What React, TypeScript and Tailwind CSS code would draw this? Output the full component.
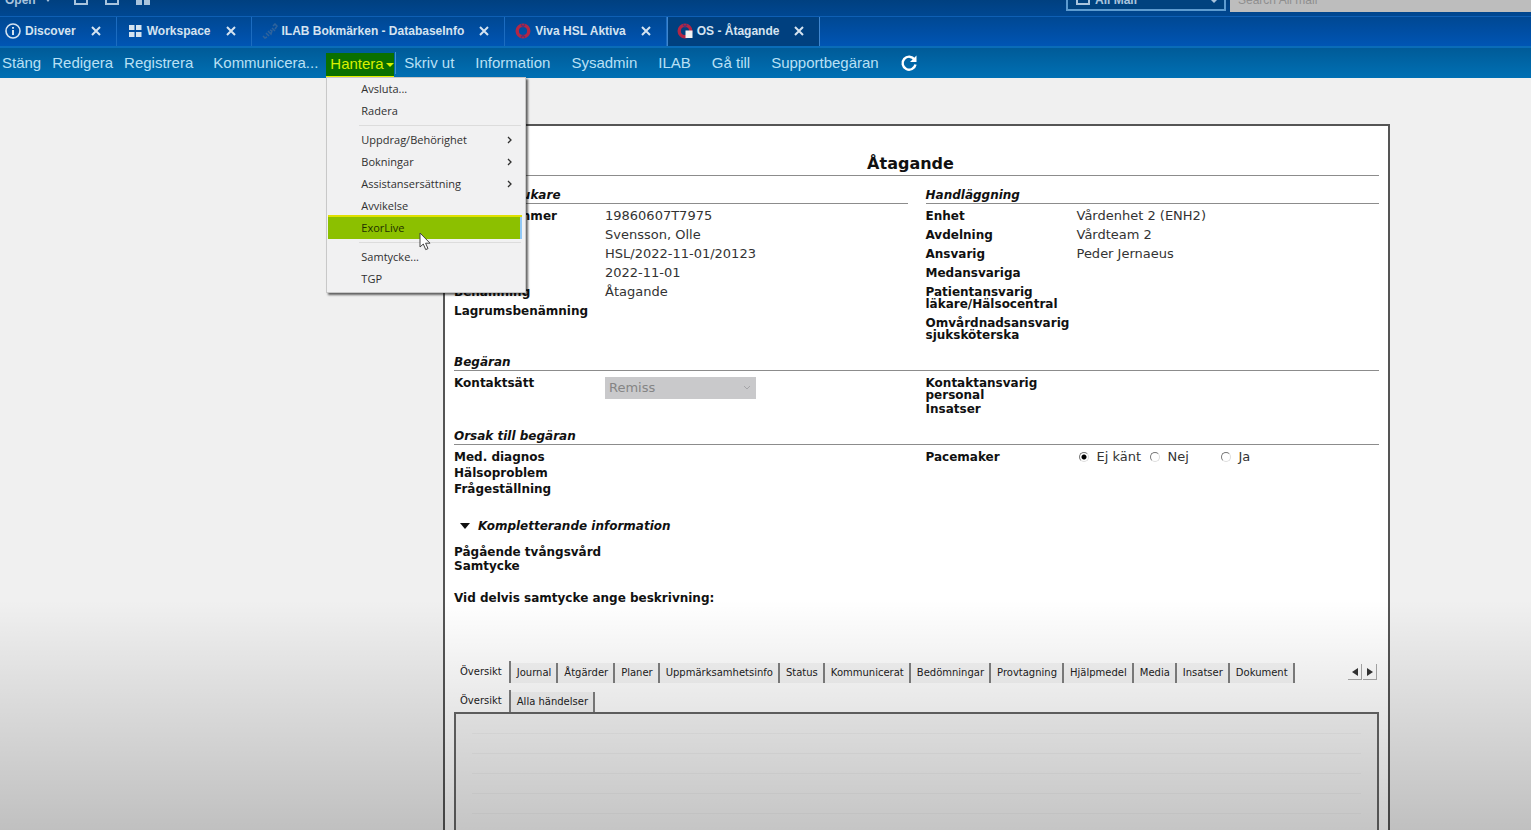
import { useState, type ReactNode } from "react";

type Field = {
    label: string;
    value?: string;
};

type DocTab = {
    title: string;
    icon: ReactNode;
};

type MenuEntry = {
    label: string;
    submenu?: boolean;
    separated?: boolean;
};

const patientFields: Field[] = [
    { label: "Personnummer", value: "19860607T7975" },
    { label: "Namn", value: "Svensson, Olle" },
    { label: "Ärende", value: "HSL/2022-11-01/20123" },
    { label: "Datum", value: "2022-11-01" },
    { label: "Benämning", value: "Åtagande" },
    { label: "Lagrumsbenämning" },
];

const handlingFields: Field[] = [
    { label: "Enhet", value: "Vårdenhet 2 (ENH2)" },
    { label: "Avdelning", value: "Vårdteam 2" },
    { label: "Ansvarig", value: "Peder Jernaeus" },
    { label: "Medansvariga" },
    { label: "Patientansvarig läkare/Hälsocentral" },
    { label: "Omvårdnadsansvarig sjuksköterska" },
];

const menuEntries: MenuEntry[] = [
    { label: "Avsluta..." },
    { label: "Radera" },
    { label: "Uppdrag/Behörighet", submenu: true, separated: true },
    { label: "Bokningar", submenu: true },
    { label: "Assistansersättning", submenu: true },
    { label: "Avvikelse" },
    { label: "ExorLive" },
    { label: "Samtycke...", separated: true },
    { label: "TGP" },
];

const recordTabs = [
    "Översikt",
    "Journal",
    "Åtgärder",
    "Planer",
    "Uppmärksamhetsinfo",
    "Status",
    "Kommunicerat",
    "Bedömningar",
    "Provtagning",
    "Hjälpmedel",
    "Media",
    "Insatser",
    "Dokument",
];

function InfoIcon() {
    return (
        <svg viewBox="0 0 16 16" className="size-4" fill="none" stroke="currentColor">
            <circle cx="8" cy="8" r="7" strokeWidth="1.6" />
            <path d="M8 7v5M8 4v1.8" strokeWidth="2" />
        </svg>
    );
}

function GridIcon() {
    return (
        <svg viewBox="0 0 16 16" className="size-4" fill="currentColor">
            <path d="M2 2h5.5v5H2zM9 2h5.5v5H9zM2 9h5.5v5H2zM9 9h5.5v5H9z" />
        </svg>
    );
}

function PlugIcon() {
    return (
        <svg viewBox="0 0 16 16" className="size-4" fill="none" stroke="#2f639c" strokeWidth="1.5">
            <path d="M1 13l2 2 2-1M4 10l3 3M6 8l3 3 1-3-2-1M10 5l3 3M11 3l2-2 2 2-2 3" />
        </svg>
    );
}

function DatabaseIcon() {
    return (
        <svg viewBox="0 0 16 16" className="size-4" fill="none">
            <circle cx="8" cy="8" r="5.8" stroke="#b32645" strokeWidth="3.4" />
            <path d="M6 1.500l2 2.500 2-2.500M6 14.500l2-2.500 2 2.500" stroke="#5d2f70" strokeWidth="1.4" />
        </svg>
    );
}

function DocumentIcon() {
    return (
        <svg viewBox="0 0 16 16" className="size-4" fill="none">
            <circle cx="8" cy="8" r="5.8" stroke="#b32645" strokeWidth="3.4" />
            <path d="M6 1.500l2 2.500 2-2.500" stroke="#5d2f70" strokeWidth="1.4" />
            <path d="M8.500 7.500h7v7.500h-7z" fill="#f2f2f2" />
        </svg>
    );
}

const docTabs: DocTab[] = [
    { title: "Discover", icon: <InfoIcon /> },
    { title: "Workspace", icon: <GridIcon /> },
    { title: "ILAB Bokmärken - DatabaseInfo", icon: <PlugIcon /> },
    { title: "Viva HSL Aktiva", icon: <DatabaseIcon /> },
    { title: "OS - Åtagande", icon: <DocumentIcon /> },
];

function TopStrip() {
    return (
        <div className="h-4 overflow-hidden">
            <div className="-mt-4 flex h-8 items-center text-xs font-bold text-[#a9c4dd]">
                <button type="button" className="flex items-center gap-2 pl-[5px]">
                    Open
                    <svg viewBox="0 0 8 8" className="size-2" fill="currentColor">
                        <path d="M1 2h6L4 6z" />
                    </svg>
                </button>
                <div className="ml-[22px] flex items-center gap-[17px]">
                    <button type="button" aria-label="Save">
                        <svg viewBox="0 0 14 10" className="h-2.5 w-3.5" fill="none" stroke="currentColor" strokeWidth="2">
                            <path d="M1 1h12v8H1z" />
                        </svg>
                    </button>
                    <button type="button" aria-label="Print">
                        <svg viewBox="0 0 14 10" className="h-2.5 w-3.5" fill="none" stroke="currentColor" strokeWidth="2">
                            <path d="M1 1h12v8H1z" />
                        </svg>
                    </button>
                    <button type="button" aria-label="Tiles">
                        <svg viewBox="0 0 14 10" className="h-2.5 w-3.5" fill="currentColor">
                            <path d="M0 0h6v10H0zM8 0h6v10H8z" />
                        </svg>
                    </button>
                </div>
                <div className="relative ml-auto h-[22px] w-[160px] border-2 border-[#5d9bd0] bg-[#00427f]">
                    <svg viewBox="0 0 14 12" className="absolute left-2 top-0.5 h-3 w-3.5" fill="none" stroke="currentColor" strokeWidth="2">
                        <path d="M1 1h12v10H1zM5 6h4" />
                    </svg>
                    <select aria-label="Search scope" className="size-full appearance-none pl-[27px] text-xs leading-4 outline-none">
                        <option>All Mail</option>
                    </select>
                    <svg viewBox="0 0 8 8" className="absolute right-1.5 top-1.5 size-2" fill="currentColor">
                        <path d="M0 2h8L4 6z" />
                    </svg>
                </div>
                <input
                    type="search"
                    aria-label="Search All mail"
                    placeholder="Search All mail"
                    className="ml-1 h-6 w-[301px] bg-[#bdbdbd] px-2 text-xs font-normal placeholder:text-[#8f8f8f]"
                />
            </div>
        </div>
    );
}

function DocumentTabs() {
    return (
        <div className="flex h-[30px] border-t border-[#0f5fb4]">
            {docTabs.map((tab, index) => {
                const active = index === docTabs.length - 1;
                return (
                    <div
                        key={tab.title}
                        className={
                            active
                                ? "flex items-center border-x border-[#3f86cf] bg-[#00407f] pb-0.5 pl-[9px] pr-[15px] text-[#d5e3f0]"
                                : "flex items-center border-r border-[#1c6cc0] pb-0.5 pl-[10px] pr-[15px] text-[#d5e3f0] first:pl-[5px]"
                        }
                    >
                        <button type="button" className="flex items-center gap-1 text-xs font-bold whitespace-nowrap">
                            {tab.icon}
                            {tab.title}
                        </button>
                        <button type="button" aria-label={`Close ${tab.title}`} className="ml-[15px]">
                            <svg viewBox="0 0 10 10" className="size-2.5" fill="none" stroke="currentColor" strokeWidth="2">
                                <path d="M1 1l8 8M9 1L1 9" />
                            </svg>
                        </button>
                    </div>
                );
            })}
        </div>
    );
}

function HanteraMenu() {
    return (
        <div
            role="menu"
            className="absolute left-0 top-full z-20 -mt-px w-[200px] border border-[#c8c8c8] bg-[#f1f1f2] pb-0.5 font-['Open_Sans',sans-serif] text-[11px] text-[#303030] shadow-[2px_2px_2px_rgba(0,0,0,0.6)]"
        >
            {menuEntries.map((entry) => {
                const highlighted = entry.label === "ExorLive";
                return (
                    <div key={entry.label}>
                        {entry.separated ? <hr className="my-[3px] ml-8 mr-1 border-[#dcdcdc]" /> : null}
                        <button
                            type="button"
                            role="menuitem"
                            className={
                                highlighted
                                    ? "mx-px flex h-[22px] w-[194px] items-center border-r-2 border-[#90c8f6] bg-[#8cc000] pl-[33px] text-[#1f3000] shadow-[0_-2px_0_#e0e000]"
                                    : "flex h-[22px] w-full items-center justify-between pl-[34px] pr-3"
                            }
                        >
                            {entry.label}
                            {entry.submenu ? (
                                <svg viewBox="0 0 6 8" className="h-2 w-1.5" fill="none" stroke="currentColor" strokeWidth="1.3">
                                    <path d="M1 1l3 3-3 3" />
                                </svg>
                            ) : null}
                        </button>
                    </div>
                );
            })}
            <svg viewBox="0 0 12 19" className="absolute left-[92px] top-[154px] h-[19px] w-3">
                <path d="M1 1v14l3.300-3 2.400 5.600 2.300-1-2.400-5.400H11z" fill="#fff" stroke="#444" />
            </svg>
        </div>
    );
}

function ActionBar() {
    const [open, setOpen] = useState(true);

    return (
        <div className="flex h-8 items-center border-t-2 border-[#0a6cb8] bg-gradient-to-b from-[#005b98] to-[#0070b4] text-[15px] whitespace-nowrap text-[#b9e0f5]">
            <div className="flex gap-[11px] pl-0.5">
                <button type="button">Stäng</button>
                <button type="button">Redigera</button>
                <button type="button">Registrera</button>
            </div>
            <button type="button" className="ml-5">Kommunicera...</button>
            <div className="relative ml-2 h-[25px] self-end">
                <button
                    type="button"
                    aria-expanded={open}
                    onClick={() => setOpen(!open)}
                    className="flex h-full w-[68px] items-center gap-0.5 border-b-2 border-[#e6f000] bg-[#0a7000] pl-1 text-[#d8f000]"
                >
                    Hantera
                    <svg viewBox="0 0 8 8" className="size-2 shrink-0" fill="currentColor">
                        <path d="M0 2h8L4 6z" />
                    </svg>
                </button>
                {open ? <HanteraMenu /> : null}
            </div>
            <div className="ml-px flex items-center gap-[21px] border-l border-[#3b94cf] pl-2">
                <button type="button">Skriv ut</button>
                <button type="button">Information</button>
                <button type="button">Sysadmin</button>
                <button type="button">ILAB</button>
                <button type="button">Gå till</button>
                <button type="button">Supportbegäran</button>
                <button type="button" aria-label="Refresh" className="text-white">
                    <svg viewBox="0 0 18 18" className="size-[18px]" fill="none" stroke="currentColor" strokeWidth="2.400">
                        <path d="M14.500 5.500A6.500 6.500 0 1 0 15.500 10.500" />
                        <path d="M16.500 1.500v6.500h-6.500z" fill="currentColor" stroke="none" />
                    </svg>
                </button>
            </div>
        </div>
    );
}

function SectionHeading({ children }: { children: ReactNode }) {
    return <h2 className="border-b border-[#8c8c8c] text-xs leading-4 font-bold italic">{children}</h2>;
}

function FieldList({ fields }: { fields: Field[] }) {
    return (
        <dl className="flex flex-col gap-[7px] pt-[6px]">
            {fields.map((field) => (
                <div key={field.label} className="grid grid-cols-[151px_1fr] leading-3">
                    <dt className="text-xs leading-3 font-bold">{field.label}</dt>
                    <dd className="text-[13px] leading-3 text-[#333]">{field.value}</dd>
                </div>
            ))}
        </dl>
    );
}

function RecordTabs({ tabs }: { tabs: string[] }) {
    return (
        <div role="tablist" className="flex items-end text-[10px] leading-4 text-[#222]">
            {tabs.map((tab, index) => (
                <button
                    key={tab}
                    type="button"
                    role="tab"
                    aria-selected={index === 0}
                    className={
                        index === 0
                            ? "h-[22px] border-r-2 border-[#808080] pl-1.5 pr-[7px]"
                            : "h-5 border-r-2 border-[#808080] bg-black/4 pl-1.5 pr-[5px]"
                    }
                >
                    {tab}
                </button>
            ))}
        </div>
    );
}

function CaseForm() {
    return (
        <section className="mt-[46px] ml-[443px] mr-[141px] flex flex-1 flex-col border-2 border-b-0 border-[#555] bg-white px-[9px] pt-7 font-['DejaVu_Sans',sans-serif] text-xs text-[#111]">
            <h1 className="border-b border-[#8c8c8c] pb-px pr-3 text-center text-base leading-5 font-bold">Åtagande</h1>

            <div className="mt-[11px] grid grid-cols-2 gap-[18px]">
                <div>
                    <SectionHeading>Patient/Brukare</SectionHeading>
                    <FieldList fields={patientFields} />
                </div>
                <div>
                    <SectionHeading>Handläggning</SectionHeading>
                    <FieldList fields={handlingFields} />
                </div>
            </div>

            <div className="mt-[13px]">
                <SectionHeading>Begäran</SectionHeading>
                <div className="grid grid-cols-2 gap-[18px] pt-[6px] leading-3 font-bold">
                    <div className="grid grid-cols-[151px_1fr] items-start">
                        <label htmlFor="contact">Kontaktsätt</label>
                        <div className="relative w-[151px]">
                            <select
                                id="contact"
                                disabled
                                className="h-[22px] w-full appearance-none bg-[#c9c9cb] pl-1 text-[13px] font-normal text-[#858585] opacity-100"
                            >
                                <option>Remiss</option>
                            </select>
                            <svg viewBox="0 0 8 6" className="absolute right-[5px] top-2 h-1.5 w-2" fill="none" stroke="#a5a5a8">
                                <path d="M1 1l3 3 3-3" />
                            </svg>
                        </div>
                    </div>
                    <div className="flex w-[151px] flex-col gap-0.5">
                        <p>Kontaktansvarig personal</p>
                        <p>Insatser</p>
                    </div>
                </div>
            </div>

            <div className="mt-[13px]">
                <SectionHeading>Orsak till begäran</SectionHeading>
                <div className="grid grid-cols-2 gap-[18px] pt-[6px] leading-3 font-bold">
                    <div className="flex flex-col gap-1">
                        <p>Med. diagnos</p>
                        <p>Hälsoproblem</p>
                        <p>Frågeställning</p>
                    </div>
                    <fieldset className="grid grid-cols-[151px_1fr] items-start">
                        <legend className="float-left">Pacemaker</legend>
                        <div className="flex pl-0.5 text-[13px] font-normal text-[#333]">
                            {["Ej känt", "Nej", "Ja"].map((option) => (
                                <label key={option} className="flex w-[71px] items-center gap-2 whitespace-nowrap">
                                    <input
                                        type="radio"
                                        name="pacemaker"
                                        defaultChecked={option === "Ej känt"}
                                        className="size-[10px] shrink-0 appearance-none rounded-full border border-[#ddd] border-t-[#777] border-l-[#777] bg-white checked:bg-[radial-gradient(circle,#000_2px,#fff_3px)]"
                                    />
                                    {option}
                                </label>
                            ))}
                        </div>
                    </fieldset>
                </div>
            </div>

            <button type="button" className="mt-[23px] flex items-center gap-2 self-start pl-[6px] text-xs leading-4 font-bold italic">
                <svg viewBox="0 0 10 6" className="h-1.5 w-2.5" fill="currentColor">
                    <path d="M0 0h10L5 6z" />
                </svg>
                Kompletterande information
            </button>

            <div className="mt-3 flex flex-col gap-0.5 leading-3 font-bold">
                <p>Pågående tvångsvård</p>
                <p>Samtycke</p>
            </div>
            <p className="mt-5 leading-3 font-bold">Vid delvis samtycke ange beskrivning:</p>

            <div className="mt-[57px] flex items-center justify-between">
                <RecordTabs tabs={recordTabs} />
                <div className="flex gap-px pr-0.5 text-[#333]">
                    <button type="button" aria-label="Previous tabs" className="flex h-4 w-[14px] items-center justify-center border-r border-b border-[#aaa]">
                        <svg viewBox="0 0 6 8" className="h-2 w-1.5" fill="currentColor">
                            <path d="M6 0v8L0 4z" />
                        </svg>
                    </button>
                    <button type="button" aria-label="Next tabs" className="flex h-4 w-[14px] items-center justify-center border-r border-b border-[#aaa]">
                        <svg viewBox="0 0 6 8" className="h-2 w-1.5" fill="currentColor">
                            <path d="M0 0v8l6-4z" />
                        </svg>
                    </button>
                </div>
            </div>
            <div className="mt-[7px]">
                <RecordTabs tabs={["Översikt", "Alla händelser"]} />
            </div>
            <div className="flex-1 border-2 border-b-0 border-[#666] bg-[#f6f6f6]">
                {[0, 1, 2, 3, 4].map((row) => (
                    <div key={row} className="mx-4 h-5 border-b border-black/3" />
                ))}
            </div>
        </section>
    );
}

export default function App() {
    return (
        <div className="relative flex min-h-screen flex-col overflow-hidden bg-[#f0f0f0] font-['Liberation_Sans',Arial,sans-serif]">
            <header>
                <div className="bg-gradient-to-b from-[#004080] to-[#0055b4]">
                    <TopStrip />
                    <DocumentTabs />
                </div>
                <ActionBar />
            </header>
            <main className="flex flex-1 flex-col">
                <CaseForm />
            </main>
            <div className="pointer-events-none absolute inset-x-0 bottom-0 h-[230px] bg-gradient-to-t from-black/20 to-transparent" />
        </div>
    );
}
